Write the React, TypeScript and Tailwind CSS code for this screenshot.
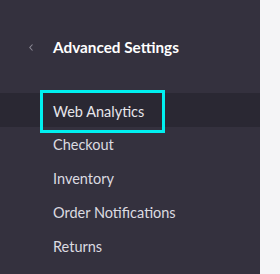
import React from "react";

const items = ["Web Analytics", "Checkout", "Inventory", "Order Notifications", "Returns"];

export default function App() {
  return (
    <div className="flex w-[280px] h-[274px] bg-[#f5f5f7]" style={{ fontFamily: "Lato, 'Noto Sans', sans-serif" }}>
      <aside className="w-[260px] h-full bg-[#34313e] pt-[30px]">
        {/* Header */}
        <div className="flex items-center h-[34px]">
          <svg className="ml-[29px] mr-[20px]" width="4" height="7" viewBox="0 0 4 7" fill="none">
            <path d="M3.5 0.5 L0.8 3.5 L3.5 6.5" stroke="#8b8995" strokeWidth="1.1" />
          </svg>
          <span className="text-[15.3px] font-bold text-white">Advanced Settings</span>
        </div>

        {/* Menu */}
        <ul className="mt-[29px]">
          {items.map((label, i) => (
            <li
              key={label}
              className={`flex items-center h-[34px] ${i === 0 ? "bg-[#2a2833]" : ""}`}
            >
              {i === 0 ? (
                <span className="ml-[43px] flex items-center h-[37px] w-[119px] pl-[10px] text-[14.5px] text-[#e6e5ea] outline-[3px] outline-solid outline-[#00f0f0] mt-[3px]">
                  {label}
                </span>
              ) : (
                <span className="ml-[53px] pt-[2px] text-[14.5px] text-[#dcdbe1]">{label}</span>
              )}
            </li>
          ))}
        </ul>
      </aside>
    </div>
  );
}
